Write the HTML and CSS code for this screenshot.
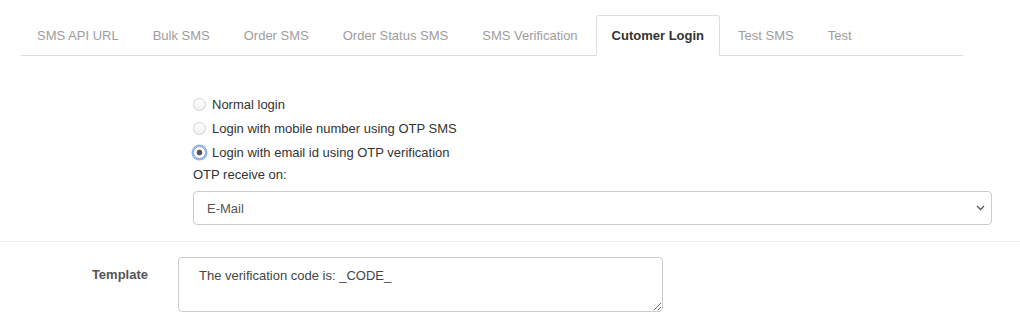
FILE: index.html
```html
<!DOCTYPE html>
<html lang="en">
<head>
<meta charset="utf-8">
<title>SMS Settings</title>
<link rel="stylesheet" href="styles.css">
</head>
<body>
<ul class="tabs">
  <li class="tab">SMS API URL</li>
  <li class="tab">Bulk SMS</li>
  <li class="tab">Order SMS</li>
  <li class="tab">Order Status SMS</li>
  <li class="tab">SMS Verification</li>
  <li class="tab active">Cutomer Login</li>
  <li class="tab">Test SMS</li>
  <li class="tab">Test</li>
</ul>

<div class="login-options">
  <label class="radio-row"><input type="radio" name="login" class="radio"><span>Normal login</span></label>
  <label class="radio-row"><input type="radio" name="login" class="radio"><span>Login with mobile number using OTP SMS</span></label>
  <label class="radio-row"><input type="radio" name="login" class="radio focused" checked><span>Login with email id using OTP verification</span></label>
  <div class="otp-label">OTP receive on:</div>
  <div class="select-wrap">
    <select class="select">
      <option>E-Mail</option>
      <option>SMS</option>
    </select>
    <svg class="chevron" width="9" height="6" viewBox="0 0 9 6" aria-hidden="true">
      <path d="M1 1 L4.5 4.5 L8 1" fill="none" stroke="#555" stroke-width="1.3"/>
    </svg>
  </div>
</div>

<div class="template-row">
  <label class="template-label" for="tpl">Template</label>
  <textarea id="tpl" class="template-input">The verification code is: _CODE_</textarea>
</div>
</body>
</html>
```

FILE: styles.css
```css
html, body {
  margin: 0;
  padding: 0;
  background: #fff;
}

body {
  font-family: "Liberation Sans", Arial, sans-serif;
  font-size: 13px;
  color: #333;
  width: 1020px;
  height: 321px;
  overflow: hidden;
}

.tabs {
  list-style: none;
  margin: 15px 57px 0 21px;
  padding: 0;
  display: flex;
  border-bottom: 1px solid #ddd;
}

.tab {
  padding: 10px 15px;
  line-height: 19px;
  margin-right: 2px;
  margin-bottom: -1px;
  border: 1px solid transparent;
  border-radius: 3px 3px 0 0;
  color: #9d9d9d;
}

.tab.active {
  color: #333;
  font-weight: bold;
  border-color: #ddd;
  border-bottom-color: #fff;
  background: #fff;
}

.login-options {
  margin: 36px 28px 0 193px;
  padding-bottom: 16px;
}

.radio-row {
  display: flex;
  align-items: center;
  height: 24px;
  color: #333;
}

.radio {
  appearance: none;
  -webkit-appearance: none;
  width: 13px;
  height: 13px;
  margin: 0 6px 0 0;
  border: 1px solid #d0d0d0;
  border-radius: 50%;
  background: linear-gradient(#fff, #f1f1f1);
  box-sizing: border-box;
  flex: none;
}

.radio:checked {
  border-color: #8a9bb8;
  background: radial-gradient(circle, #555 0 2.6px, #fff 3.2px);
}

.radio.focused {
  box-shadow: 0 0 0 1.5px #8fb6f7;
}

.otp-label {
  line-height: 22px;
  margin-bottom: 5px;
  color: #333;
}

.select-wrap {
  position: relative;
}

.select {
  appearance: none;
  -webkit-appearance: none;
  display: block;
  width: 100%;
  height: 34px;
  padding: 0 13px;
  border: 1px solid #ccc;
  border-radius: 4px;
  background: #fff;
  font-family: "Liberation Sans", Arial, sans-serif;
  font-size: 13px;
  color: #555;
  box-sizing: border-box;
}

.chevron {
  position: absolute;
  right: 7px;
  top: 14px;
  pointer-events: none;
}

.template-row {
  border-top: 1px solid #eee;
  padding-top: 15px;
  display: grid;
  grid-template-columns: 148px 485px;
  column-gap: 30px;
  align-items: start;
}

.template-label {
  text-align: right;
  font-weight: bold;
  color: #555;
  line-height: 18px;
  padding-top: 9px;
}

.template-input {
  height: 55px;
  box-sizing: border-box;
  padding: 9px 20px;
  border: 1px solid #ccc;
  border-radius: 4px;
  font-family: "Liberation Sans", Arial, sans-serif;
  font-size: 13px;
  line-height: 18px;
  color: #444;
  resize: both;
  margin: 0;
}
```
